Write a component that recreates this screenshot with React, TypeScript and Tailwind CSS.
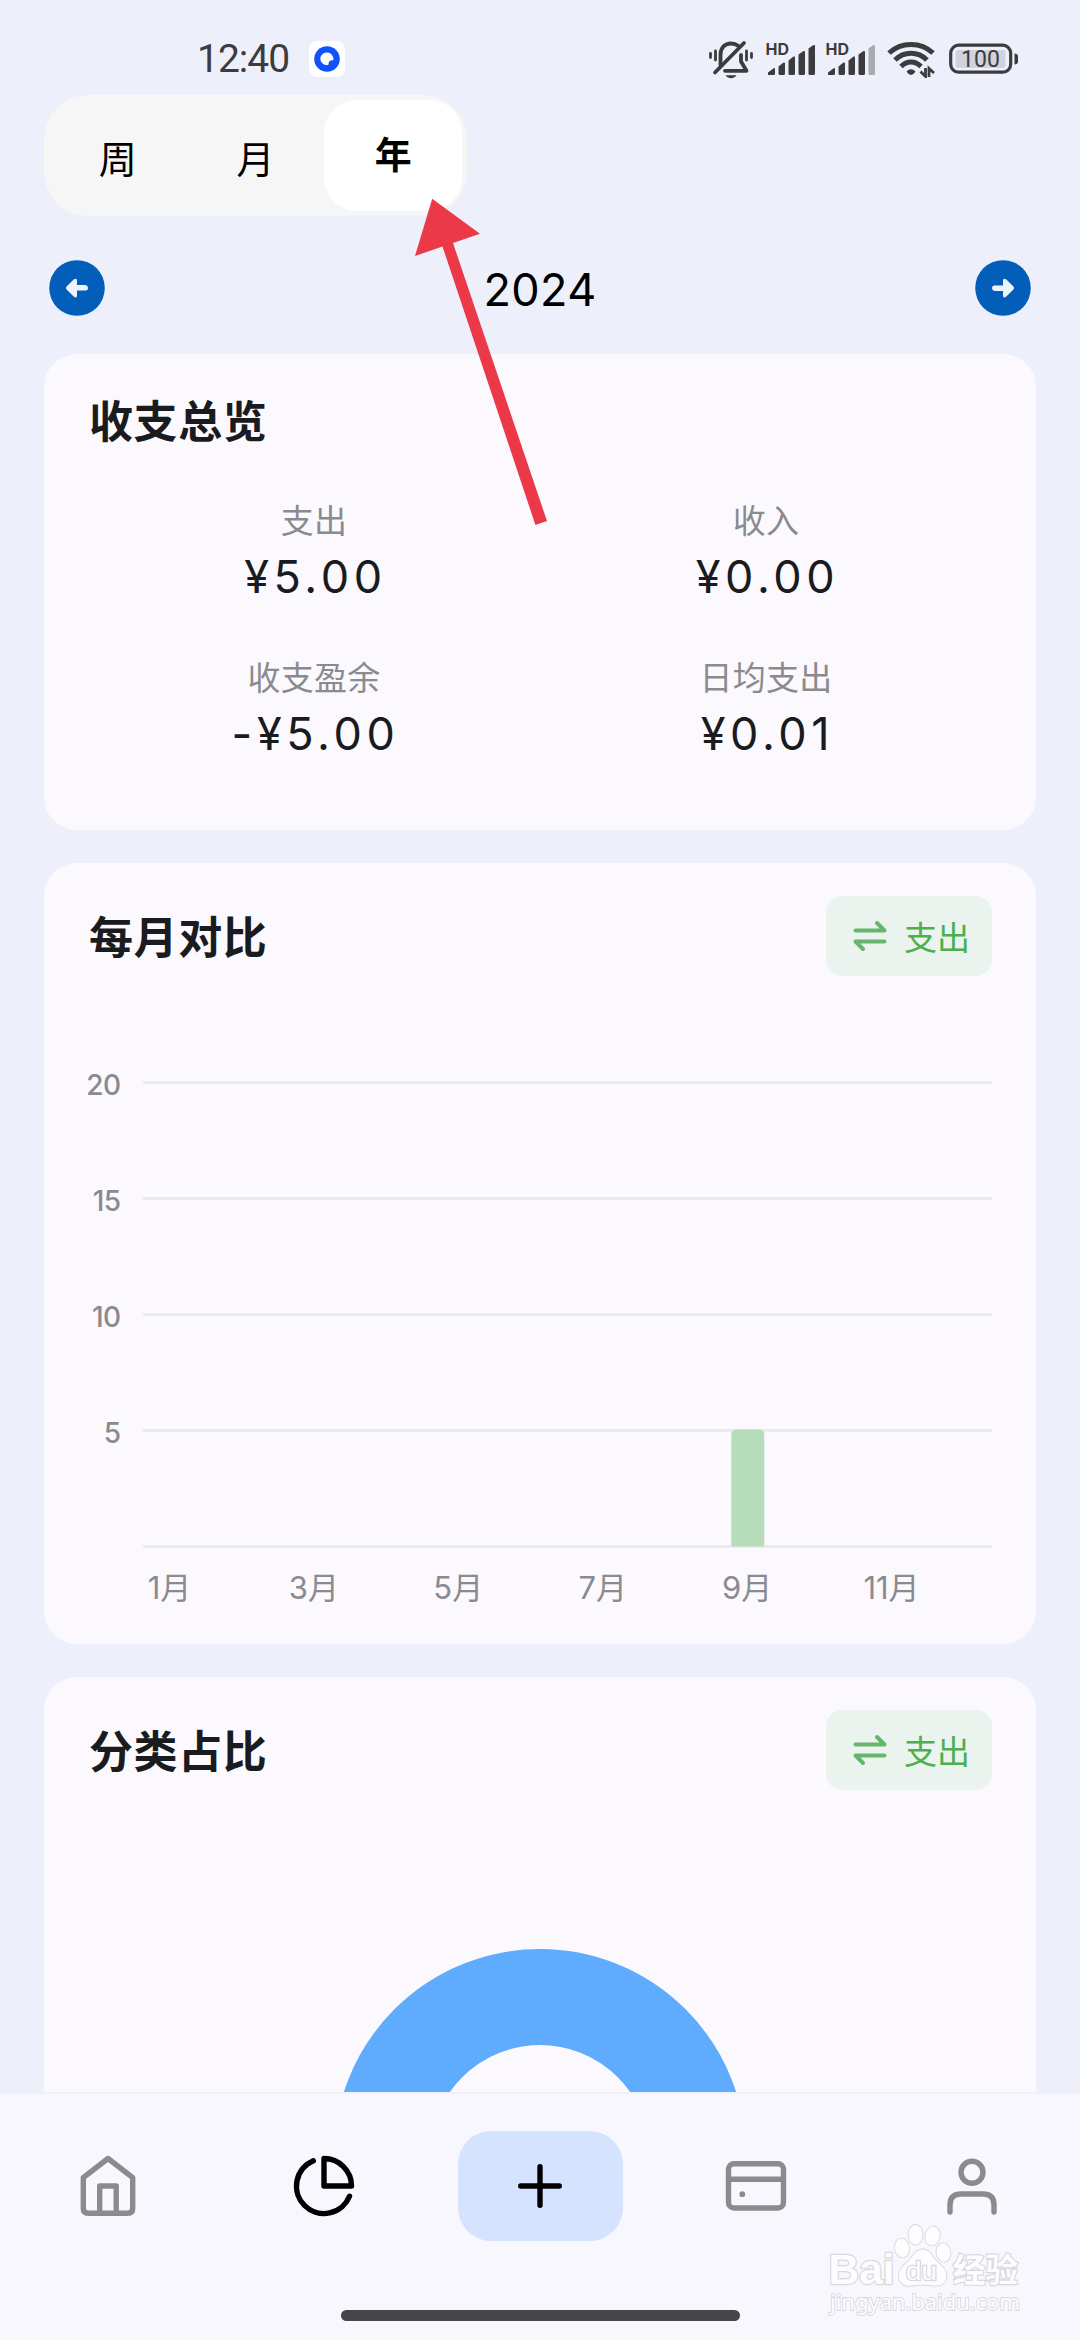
import { useState } from "react";

const SUMMARY = [
  { label: "支出", value: "¥5.00" },
  { label: "收入", value: "¥0.00" },
  { label: "收支盈余", value: "-¥5.00" },
  { label: "日均支出", value: "¥0.01" },
];

const MONTHLY = [0, 0, 0, 0, 0, 0, 0, 0, 5, 0, 0, 0];
const TICKS = [20, 15, 10, 5, 0];

const BellOffIcon = () => (
  <svg width="46" height="40" viewBox="0 0 46 40" fill="none" stroke="#3c3c3e" strokeLinecap="round" strokeLinejoin="round">
    <path d="M2.5 13.5v4M7.5 11v9M38.5 11v9M43.5 13.5v4" strokeWidth="2.8" />
    <path d="M12.5 25V15C12.5 7.500 17 3.500 23 3.500C26 3.500 28.500 4.500 30.500 6" strokeWidth="3.800" />
    <path d="M33 15V21.500L38.500 30.800H17" strokeWidth="3.800" />
    <path d="M36 3L7 32.500" strokeWidth="3.800" />
    <path d="M17.500 35.200H28.500C27 37.500 25 38.200 23 38.200S19 37.500 17.500 35.200Z" fill="#3c3c3e" stroke="none" />
  </svg>
);

const SignalIcon = ({ weak = false }: { weak?: boolean }) => (
  <svg width="51" height="40" viewBox="-1 -6 51 40" fill="#3c3c3e">
    <text x="-0.5" y="13" fontSize="16" fontWeight="700" className="font-[Inter]">
      HD
    </text>
    <path d="M2 33V30.500L8 26Q9 25.500 9 27V31.500Q9 33 7.500 33Z" />
    <path d="M12.500 33V24.500L17.500 20.500Q19 20 19 21.500V31.500Q19 33 17.500 33H14Q12.500 33 12.500 31.500Z" />
    <path d="M22.500 31.500V18.500L27.500 14.500Q29 14 29 15.500V31.500Q29 33 27.500 33H24Q22.500 33 22.500 31.500Z" />
    <path d="M32.500 31.500V12.500L37.500 9Q39 8.500 39 10V31.500Q39 33 37.500 33H34Q32.500 33 32.500 31.500Z" />
    <path
      d="M42.500 31.500V6.500L47.500 3Q49 2.500 49 4V31.500Q49 33 47.500 33H44Q42.500 33 42.500 31.500Z"
      fill={weak ? "#a9aaae" : "#3c3c3e"}
    />
  </svg>
);

const WifiIcon = () => (
  <svg width="48" height="38" viewBox="0 0 48 38" fill="none" stroke="#3c3c3e" strokeWidth="5">
    <path d="M2 13C14 1.500 34 1.500 46 13" />
    <path d="M8 20C17 11 31 11 40 20" />
    <path d="M14 26.500C20 20.500 28 20.500 34 26.500" />
    <path d="M19.500 31.500Q24 27 28.500 31.500Q27 34.500 24 35Q21 34.500 19.500 31.500Z" fill="#3c3c3e" stroke="none" />
    <path d="M38.500 28V36.500L33.500 31.500M42 37V28.500L47 33" strokeWidth="2.800" />
  </svg>
);

const BatteryIcon = () => (
  <svg width="70" height="32" viewBox="0 0 70 32">
    <rect x="1.700" y="2.200" width="60" height="27" rx="8" fill="none" stroke="#3c3c3e" strokeWidth="3.200" />
    <rect x="6.500" y="7" width="50" height="18" rx="3" fill="#d0d3dd" />
    <path d="M65.500 10.500Q69 11 69 13V19Q69 21 65.500 21.500Z" fill="#3c3c3e" />
    <text x="31.500" y="24" textAnchor="middle" fontSize="23" fill="#3c3c3e" className="font-[Roboto]">
      100
    </text>
  </svg>
);

const StatusBar = () => (
  <div className="flex h-[95px] items-start">
    <span className="ml-[197px] mt-[36px] w-[112px] font-[Roboto] text-[39px] leading-[47px] tracking-[-1px] text-[#3c3c3e]">
      12:40
    </span>
    <svg className="mt-[41px]" width="36" height="36" viewBox="0 0 36 36">
      <rect width="36" height="36" rx="8" fill="#fff" />
      <circle cx="18" cy="18" r="12.800" fill="#1152fd" />
      <path d="M18 11.500A6.300 6.300 0 1 0 19.500 23.800C19.500 20.500 20.500 19.500 24.200 19.300A6.300 6.300 0 0 0 18 11.500Z" fill="#fff" />
    </svg>
    <div className="ml-[363px] mt-10 flex items-start">
      <BellOffIcon />
      <div className="-mt-1 ml-[11px] flex gap-[9px]">
        <SignalIcon />
        <SignalIcon weak />
      </div>
      <div className="ml-[11px]">
        <WifiIcon />
      </div>
      <div className="ml-[14px] mt-[3px]">
        <BatteryIcon />
      </div>
    </div>
  </div>
);

const RangeTabs = () => {
  const [range, setRange] = useState("年");

  return (
    <div className="ml-11 flex h-[121px] w-[423px] rounded-[44px] bg-[#f6f6f6] p-[5px]">
      {["周", "月", "年"].map((item) => (
        <button
          key={item}
          onClick={() => setRange(item)}
          className={
            item === range
              ? "flex-1 rounded-[33px] bg-white pt-px text-[37px] font-bold text-black"
              : "flex-1 pt-[7px] text-[38px] text-black"
          }
        >
          {item}
        </button>
      ))}
    </div>
  );
};

const ArrowButton = ({ flip = false }: { flip?: boolean }) => (
  <button className={flip ? "rotate-180" : ""}>
    <svg width="56" height="56" viewBox="0 0 56 56">
      <circle cx="28" cy="28" r="27.800" fill="#025eb9" />
      <path
        d="M17.500 26.500L25 19.300Q28 17.500 28 20.500V25H36.500Q39 25.300 39 28T36.500 30.500H28V35.500Q28 38.500 25 36.700L17.500 29.500Q16.500 28 17.500 26.500Z"
        fill="#eef3fc"
      />
    </svg>
  </button>
);

const TypeSwitch = () => (
  <button className="flex h-20 w-[166px] items-center rounded-2xl bg-[#ebf3ef] pl-[27px] text-[33px] text-[#4caf50]">
    <svg className="mr-[17px]" width="34" height="32" viewBox="0 0 34 32" fill="none" stroke="#67b56c" strokeWidth="4" strokeLinecap="round" strokeLinejoin="round">
      <path d="M2.500 10.500H31.500L24 3" />
      <path d="M31.500 21.500H2.500L10 29" />
    </svg>
    <span className="pt-[6px]">支出</span>
  </button>
);

const CardHeader = ({ title }: { title: string }) => (
  <div className="flex h-20 items-center justify-between px-11">
    <h2 className="pl-px pt-[3px] text-[44px] font-bold tracking-[0.6px] text-[#1a1b1f]">{title}</h2>
    <TypeSwitch />
  </div>
);

const MonthlyChart = () => {
  const top = 21.5;
  const step = 116;
  const monthX = (i: number) => 126.2 + i * 72.2;

  return (
    <svg className="mt-[85px]" width="992" height="570" viewBox="0 0 992 570">
      {TICKS.map((tick, i) => (
        <g key={tick}>
          <rect x="99" y={top + i * step - 1.5} width="849" height="3" fill="#ebebed" />
          {tick > 0 && (
            <text x="76.5" y={top + i * step + 12} textAnchor="end" fontSize="28" fontWeight="500" letterSpacing="-0.6" fill="#8a8b8f">
              {tick}
            </text>
          )}
        </g>
      ))}
      {MONTHLY.map((value, i) => {
        const h = (value / 5) * step;
        const x = monthX(i) - 16.5;
        const base = top + 4 * step;
        return value > 0 ? (
          <path
            key={i}
            d={`M${x} ${base}V${base - h + 4}Q${x} ${base - h - 1} ${x + 5} ${base - h - 1}H${x + 28}Q${x + 33} ${base - h - 1} ${x + 33} ${base - h + 4}V${base}Z`}
            fill="#b6dcba"
          />
        ) : null;
      })}
      {MONTHLY.map((_, i) =>
        i % 2 === 0 ? (
          <text key={i} x={monthX(i) - 0.7} y={top + 4 * step + 52} textAnchor="middle" fontSize="31" fill="#8a8b8f">
            {i + 1}月
          </text>
        ) : null
      )}
    </svg>
  );
};

const BottomNav = () => (
  <nav className="relative flex h-[248px] flex-col items-center border-t-2 border-[#f0f0f6] bg-[#f8f7fd]">
    <div className="mt-[37px] grid h-[110px] w-full grid-cols-5 place-items-center text-[#8a8b8f]">
      <svg width="66" height="66" viewBox="0 0 66 66" fill="none" stroke="currentColor" strokeWidth="5.400" strokeLinecap="round" strokeLinejoin="round">
        <path d="M33 5.500L57.700 24.700V55.300Q57.700 60.300 52.700 60.300H13.300Q8.300 60.300 8.300 55.300V24.700Z" />
        <path d="M24.700 60V33H41.200V60" />
      </svg>
      <svg className="text-black" width="66" height="66" viewBox="0 0 66 66" fill="none" stroke="currentColor" strokeWidth="5.400" strokeLinecap="round" strokeLinejoin="round">
        <path d="M33 5.500V33H60.500A27.500 27.500 0 0 0 33 5.500Z" />
        <path d="M22.300 7.700A27.500 27.500 0 1 0 58.500 43.300" />
      </svg>
      <button className="flex h-[110px] w-[165px] items-center justify-center rounded-[33px] bg-[#d6e3ff]">
        <svg width="66" height="66" viewBox="0 0 66 66" fill="none" stroke="#000" strokeWidth="5.400" strokeLinecap="round">
          <path d="M33 13.700V52.300M13.700 33H52.300" />
        </svg>
      </button>
      <svg width="66" height="66" viewBox="0 0 66 66" fill="none" stroke="currentColor" strokeWidth="5.400">
        <rect x="5.500" y="10.800" width="55" height="44.200" rx="5.500" />
        <path d="M5.500 26.300H60.500" />
        <circle cx="19.300" cy="41.200" r="2.900" fill="currentColor" stroke="none" />
      </svg>
      <svg width="66" height="66" viewBox="0 0 66 66" fill="none" stroke="currentColor" strokeWidth="5.400" strokeLinecap="round">
        <circle cx="33" cy="19.300" r="11" />
        <path d="M11 59V52Q11 41 22 41H44Q55 41 55 52V59" />
      </svg>
    </div>
    <div className="mt-[69px] h-[11px] w-[399px] rounded-full bg-[#464648]" />
    <Watermark />
  </nav>
);

const Watermark = () => (
  <svg className="absolute left-[820px] top-[121px]" width="210" height="110" viewBox="0 0 210 110" fill="#fdfdfe" stroke="#d8d8de" strokeWidth="2.400" paintOrder="stroke">
    <text x="8.500" y="68.500" fontSize="42" fontWeight="700" textLength="66" lengthAdjust="spacingAndGlyphs" className="font-['Liberation_Sans']">
      Bai
    </text>
    <g strokeWidth="1.800">
      <ellipse cx="82" cy="33" rx="7" ry="9.500" transform="rotate(-8 82 33)" />
      <ellipse cx="95.500" cy="19.800" rx="7" ry="9.800" />
      <ellipse cx="112.500" cy="21" rx="7.200" ry="9.500" transform="rotate(12 112.500 21)" />
      <ellipse cx="123.500" cy="37.500" rx="7" ry="9.200" transform="rotate(-10 123.500 37.500)" />
      <path d="M102.500 34.500C94 34.500 93 43 86.500 48C81 52.500 78.500 57 79 62C80 70 86 71.500 92 70.500Q102.500 68.500 113 70.500C120 71.500 126 69 126.500 61C126.500 56 123 52 119 48.500C112 43 111 34.500 102.500 34.500Z" />
    </g>
    <text x="86" y="65" fontSize="26" textLength="31" lengthAdjust="spacingAndGlyphs" className="font-['Liberation_Sans']">
      du
    </text>
    <text x="133" y="66.500" fontSize="33" fontWeight="700" textLength="65" lengthAdjust="spacingAndGlyphs" className="font-['Noto_Sans_CJK_SC']">
      经验
    </text>
    <text x="10" y="95" fontSize="22" strokeWidth="1.800" textLength="190" lengthAdjust="spacingAndGlyphs" className="font-['Noto_Sans']">
      jingyan.baidu.com
    </text>
  </svg>
);

const App = () => {
  return (
    <div className="relative flex h-[2340px] w-[1080px] flex-col overflow-hidden bg-[#edf0fa] font-['Inter','Noto_Sans_CJK_SC',sans-serif]">
      <StatusBar />
      <RangeTabs />

      <div className="mx-[49px] mt-11 flex h-14 items-center justify-between">
        <ArrowButton />
        <span className="pt-1 text-[45px] tracking-[0.4px] text-black">2024</span>
        <ArrowButton flip />
      </div>

      <main className="mt-[38px] flex min-h-0 flex-1 flex-col gap-[33px] overflow-hidden px-11">
        <section className="h-[476px] shrink-0 rounded-[33px] bg-[#fbf9fe]">
          <h2 className="px-[45px] pt-[2px] text-[44px] font-bold leading-[132px] tracking-[0.6px] text-[#1a1b1f]">收支总览</h2>
          <div className="mt-[11px] grid grid-cols-2 gap-y-[45px] px-11 text-center">
            {SUMMARY.map((item) => (
              <div key={item.label}>
                <div className="text-[33px] leading-[44px] tracking-[0.3px] text-[#8a8b8f]">{item.label}</div>
                <div className="pl-[3px] text-[45px] leading-[68px] tracking-[4.6px] text-[#1a1b1f]">{item.value}</div>
              </div>
            ))}
          </div>
        </section>

        <section className="h-[781px] shrink-0 rounded-[33px] bg-[#fbf9fe] pt-[33px]">
          <CardHeader title="每月对比" />
          <MonthlyChart />
        </section>

        <section className="h-[900px] shrink-0 rounded-[33px] bg-[#fbf9fe] pt-[33px]">
          <CardHeader title="分类占比" />
          <div className="mt-[159px] flex justify-center">
            <svg width="412" height="412" viewBox="0 0 412 412">
              <circle cx="206" cy="206" r="158" fill="none" stroke="#5fabfd" strokeWidth="96" />
            </svg>
          </div>
        </section>
      </main>

      <BottomNav />

      {/* Pointer towards the selected range */}
      <svg className="pointer-events-none absolute left-[410px] top-[190px]" width="145" height="340" viewBox="410 190 145 340">
        <path d="M432.200 198.700L480 233.700L453 243L547 521L535.400 525L442.500 246.500L415 256Z" fill="#ec3948" />
      </svg>
    </div>
  );
};

export default App;
